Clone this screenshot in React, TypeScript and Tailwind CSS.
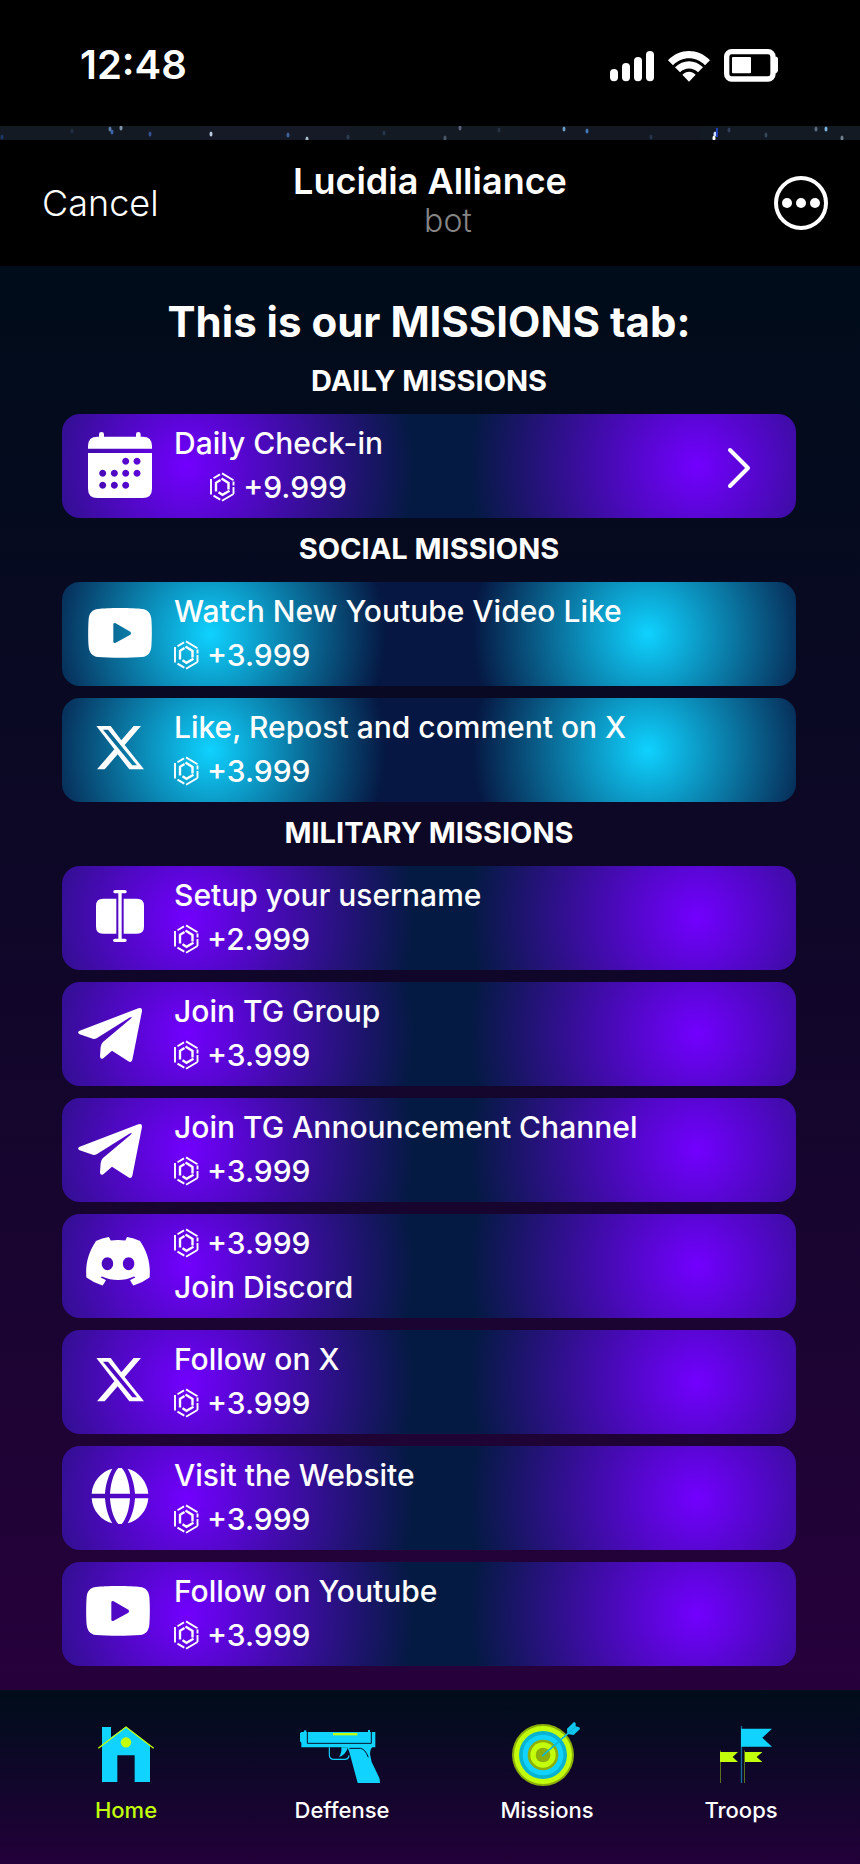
import type { ReactNode } from "react";
import { FaDiscord } from "react-icons/fa6";

type IconName = "calendar" | "youtube" | "x" | "rename" | "telegram" | "discord" | "globe" | "channel";

type Mission = {
  icon: IconName;
  title: string;
  points: string;
  centered?: boolean;
  pointsFirst?: boolean;
  arrow?: boolean;
};

const daily: Mission[] = [
  { icon: "calendar", title: "Daily Check-in", points: "+9.999", centered: true, arrow: true },
];

const social: Mission[] = [
  { icon: "youtube", title: "Watch New Youtube Video Like", points: "+3.999" },
  { icon: "x", title: "Like, Repost and comment on X", points: "+3.999" },
];

const military: Mission[] = [
  { icon: "rename", title: "Setup your username", points: "+2.999" },
  { icon: "telegram", title: "Join TG Group", points: "+3.999" },
  { icon: "telegram", title: "Join TG Announcement Channel", points: "+3.999" },
  { icon: "discord", title: "Join Discord", points: "+3.999", pointsFirst: true },
  { icon: "x", title: "Follow on X", points: "+3.999" },
  { icon: "globe", title: "Visit the Website", points: "+3.999" },
  { icon: "channel", title: "Follow on Youtube", points: "+3.999" },
];

const stars = [
  [110, 3, "#5d7da8"], [112, 6, "#3b62a8"], [121, 2, "#7f93a8"], [150, 8, "#33508f"],
  [211, 8, "#b9cbe0"], [288, 9, "#3f6296"], [307, 13, "#a9bccb"], [348, 11, "#2f3c50"],
  [384, 7, "#27364d"], [445, 12, "#4a5867"], [460, 2, "#596375"], [499, 4, "#263142"],
  [564, 3, "#6e9bc4"], [587, 5, "#4378b5"], [651, 11, "#26344a"], [714, 12, "#ffffff"],
  [715, 8, "#c9ddff"], [729, 4, "#30405a"], [766, 9, "#36475a"], [816, 3, "#5e6c7c"],
  [826, 3, "#79b4dd"], [842, 12, "#6e818c"], [2, 11, "#1d3768"], [72, 5, "#202d40"],
] as const;

function StarStrip() {
  return (
    <svg className="block h-[14px] w-full bg-[#10151f]" viewBox="0 0 860 14" preserveAspectRatio="xMidYMid slice" aria-hidden="true">
      <rect width="860" height="14" fill="#141a24" />
      <rect x="200" width="150" height="14" fill="#151a26" />
      <rect x="520" width="180" height="14" fill="#131823" />
      {stars.map(([x, y, c]) => (
        <ellipse key={`${x}-${y}`} cx={x} cy={y} rx="1.5" ry="2.6" fill={c} />
      ))}
      <path d="M717 2v9" stroke="#2140b8" strokeWidth="2" />
    </svg>
  );
}

function StatusBar() {
  return (
    <div className="flex h-[126px] items-center justify-between bg-black px-[80px] pt-1">
      <span className="text-[40px] leading-[48px] font-semibold">12:48</span>
      <svg className="h-[36px] w-[172px]" viewBox="54 48 516 108" fill="#fff" aria-label="Signal, Wi-Fi and battery">
        <rect x="60" y="114" width="24" height="37" rx="12" />
        <rect x="96" y="96" width="24" height="55" rx="12" />
        <rect x="132" y="78" width="24" height="73" rx="12" />
        <rect x="168" y="60" width="24" height="91" rx="12" />
        <path d="M234 88C270 51 324 51 360 88L345 103C318 75 276 75 249 103Z" />
        <path d="M255 109C279 85 315 85 339 109L324 124C308 109 286 109 270 124Z" />
        <path d="M277 131C289 119 305 119 317 131L297 152Z" />
        <rect x="410" y="62" width="139" height="82" rx="15" fill="none" stroke="#fff" strokeWidth="16" />
        <path d="M554 77H560Q564 80 564 84V118Q564 124 558 127H554Z" />
        <rect x="426" y="78" width="57" height="49" rx="3" />
      </svg>
    </div>
  );
}

function Header() {
  return (
    <header className="grid h-[126px] grid-cols-[1fr_auto_1fr] items-center bg-black px-8">
      <button type="button" className="justify-self-start pl-2.5 text-[36px] leading-[44px] font-light">
        Cancel
      </button>
      <div className="flex flex-col items-center pb-1">
        <p className="text-[36px] leading-[40px] font-semibold">Lucidia Alliance</p>
        <p className="pl-9 text-[32px] leading-[40px] font-light text-[#858585]">bot</p>
      </div>
      <button type="button" aria-label="More options" className="justify-self-end">
        <svg className="size-[54px]" viewBox="0 0 54 54" fill="#fff" aria-hidden="true">
          <circle cx="27" cy="27" r="25" fill="none" stroke="#fff" strokeWidth="4" />
          <circle cx="13" cy="27" r="5" />
          <circle cx="27" cy="27" r="5" />
          <circle cx="41" cy="27" r="5" />
        </svg>
      </button>
    </header>
  );
}

function Glyph({ viewBox, children }: { viewBox: string; children: ReactNode }) {
  return (
    <svg className="h-[76px] w-[84px] shrink-0" viewBox={viewBox} fill="#fff" aria-hidden="true">
      {children}
    </svg>
  );
}

function YoutubeShape() {
  return (
    <path
      fillRule="evenodd"
      d="M240 234C270 234 292 235 306 237C323 239 332 249 334 266C336 290 336 328 334 350C332 368 324 379 306 381C270 384 210 384 174 381C157 379 148 368 146 350C144 328 144 290 146 266C148 249 157 239 174 237C190 235 210 234 240 234ZM220 283V335Q221 341 227 338L271 314Q276 309 271 305L227 280Q221 277 220 283Z"
    />
  );
}

function MissionIcon({ name }: { name: IconName }) {
  switch (name) {
    case "calendar":
      return (
        <Glyph viewBox="114 474 252 228">
          <path d="M144 536V528Q144 500 172 500H177V493Q177 486 184.500 486Q192 486 192 493V500H288V493Q288 486 295 486Q302 486 302 493V500H308Q336 500 336 528V536Z" />
          <path
            fillRule="evenodd"
            d="M144 549H336V656Q336 684 308 684H172Q144 684 144 656ZM257 563a10.500 10.500 0 1 0 .1 0ZM291 563a10.500 10.500 0 1 0 .1 0ZM188 599a10.500 10.500 0 1 0 .1 0ZM223 599a10.500 10.500 0 1 0 .1 0ZM257 599a10.500 10.500 0 1 0 .1 0ZM291 599a10.500 10.500 0 1 0 .1 0ZM188 635a10.500 10.500 0 1 0 .1 0ZM223 635a10.500 10.500 0 1 0 .1 0ZM257 635a10.500 10.500 0 1 0 .1 0Z"
          />
        </Glyph>
      );
    case "youtube":
      return (
        <Glyph viewBox="114 198 252 228">
          <YoutubeShape />
        </Glyph>
      );
    case "channel":
      return (
        <Glyph viewBox="120 204 252 228">
          <YoutubeShape />
        </Glyph>
      );
    case "x":
      return (
        <Glyph viewBox="114 546 252 228">
          <path
            fillRule="evenodd"
            d="M169 588H212L244 631L281 588H303L254 645L312 718H268L233 673L194 718H171L223 658ZM189 599L277 706H291L204 599Z"
          />
        </Glyph>
      );
    case "rename":
      return (
        <Glyph viewBox="114 174 252 228">
          <path d="M189 230H229V335H189Q168 335 168 314V251Q168 230 189 230Z" />
          <path d="M251 230H291Q312 230 312 251V314Q312 335 291 335H251Z" />
          <path d="M225 204H255Q260 204 260 209Q260 214 255 214H245V350H255Q260 350 260 355Q260 360 255 360H225Q219 360 219 355Q219 350 225 350H235V214H225Q220 214 220 209Q220 204 225 204Z" />
        </Glyph>
      );
    case "telegram":
      return (
        <Glyph viewBox="114 528 252 228">
          <path d="M119 632L295 565Q307 561 306 573L277 719Q274 729 265 724L216 692L190 715Q181 720 180 709L182 681Q182 673 189 666L272 596Q280 588 268 593L170 655Q162 659 154 655L119 643Q110 637 119 632Z" />
        </Glyph>
      );
    case "discord":
      return (
        <Glyph viewBox="114 414 252 228">
          <FaDiscord x={130} y={410} size={208} />
        </Glyph>
      );
    case "globe":
      return (
        <Glyph viewBox="114 90 252 228">
          <path d="M217 116C206 136 197 162 195 191H155C157 155 184 124 217 116Z" />
          <path d="M263 116C296 124 322 155 325 191H285C283 162 275 136 263 116Z" />
          <path d="M210 191C212 156 223 126 235 114H245C257 126 268 156 270 191Z" />
          <path d="M155 205H195C197 234 205 260 217 280C184 272 157 242 155 205Z" />
          <path d="M285 205H325C322 242 296 272 263 280C275 260 283 234 285 205Z" />
          <path d="M210 205H270C268 240 257 270 245 282H235C223 270 212 240 210 205Z" />
        </Glyph>
      );
  }
}

function Coin() {
  return (
    <svg className="h-[30px] w-[25px] shrink-0" viewBox="0 0 25 30" fill="none" stroke="#fff" strokeWidth="1.900" aria-hidden="true">
      <path d="M1 7V22.500M3.500 6.200L10 2.400M12 1.400L23.500 8.200M23.500 9.500V13.500M23.500 15V22M3.500 23.600L10.300 27.600M12 28.700L23.500 22" />
      <path d="M6 19.500V10.800L10.500 8M11.500 6.600L18.500 11V17.500M8.500 20.300L12.500 22.800L19.500 18.800" strokeWidth="2.400" />
    </svg>
  );
}

function MissionCard({ mission, tone }: { mission: Mission; tone: "purple" | "cyan" }) {
  const surface =
    tone === "purple"
      ? "bg-[radial-gradient(circle_228px_at_17%_50%,#7200ff,#7200ff00),radial-gradient(circle_228px_at_86.5%_50%,#7200ff,#7200ff00)] bg-[#041a42]"
      : "bg-[radial-gradient(circle_176px_at_20.2%_50%,#0fd2ff,#0fd2ff00),radial-gradient(circle_176px_at_79.8%_50%,#0fd2ff,#0fd2ff00)] bg-[#051742]";

  return (
    <button type="button" className={`flex h-[104px] w-full items-center gap-3 rounded-[18px] pr-11 pl-4 text-left text-[30px] leading-[44px] font-medium ${surface}`}>
      <MissionIcon name={mission.icon} />
      <span className={`flex pb-[2px] ${mission.pointsFirst ? "flex-col-reverse" : "flex-col"} ${mission.centered ? "items-center" : "items-start"}`}>
        <span>{mission.title}</span>
        <span className="flex items-center gap-2">
          <Coin />
          {mission.points}
        </span>
      </span>
      {mission.arrow && (
        <svg className="mt-1 ml-auto h-[44px] w-[26px]" viewBox="0 0 26 44" fill="none" stroke="#fff" strokeWidth="4" strokeLinecap="round" strokeLinejoin="round" aria-hidden="true">
          <path d="M4 4L22 22L4 40" />
        </svg>
      )}
    </button>
  );
}

function Section({ title, missions, tone }: { title: string; missions: Mission[]; tone: "purple" | "cyan" }) {
  return (
    <section>
      <h2 className="h-[64px] text-center text-[29px] leading-[62px] font-bold">{title}</h2>
      <ul className="flex flex-col gap-3">
        {missions.map((m) => (
          <li key={m.title}>
            <MissionCard mission={m} tone={tone} />
          </li>
        ))}
      </ul>
    </section>
  );
}

function NavItem({ label, viewBox, active, children }: { label: string; viewBox: string; active?: boolean; children: ReactNode }) {
  return (
    <a href={`#${label.toLowerCase()}`} className={`flex flex-col items-center gap-2 text-[22px] leading-[32px] font-medium ${active ? "text-[#c3ff0a]" : "text-white"}`}>
      <svg className="h-[64px] w-[88px]" viewBox={viewBox} aria-hidden="true">
        {children}
      </svg>
      {label}
    </a>
  );
}

function BottomNav() {
  return (
    <nav className="grid min-h-[174px] grid-cols-[216fr_216fr_194fr_194fr] items-start bg-linear-to-b from-[#000d1a] via-[#10062a] to-[#220039] pt-8 pr-[22px] pl-[18px]">
      <NavItem label="Home" viewBox="246 126 264 192" active>
        <path d="M306 141H333V172L378 140L450 196V306H404V226H352V306H306Z" fill="#10d3ff" />
        <path d="M295 205L378 141L461 205" fill="none" stroke="#c3ff0a" strokeWidth="4" />
        <circle cx="378" cy="187" r="15.500" fill="#c3ff0a" />
      </NavItem>
      <NavItem label="Deffense" viewBox="894 126 264 192">
        <path d="M904 156H911L914 150L919 152V156H1104V150H1110V156H1126V202H1117Q1111 206 1110 222L1115 246L1137 292Q1140 298 1140 309H1073L1048 216L1042 202H904V188L900 184V160Z" fill="#10d3ff" />
        <path d="M922 156V190H1114V156" fill="none" stroke="#071028" strokeWidth="3" />
        <path d="M1048 205H1082Q1096 208 1105 232" fill="none" stroke="#0b0825" strokeWidth="3" />
        <path d="M988 202V224Q988 238 1002 238H1034Q1046 238 1047 226" fill="none" stroke="#10d3ff" strokeWidth="3.500" />
        <path d="M1024 202H1044Q1037 225 1017 231Q1026 218 1024 202Z" fill="#10d3ff" />
        <rect x="999" y="159" width="73" height="7" fill="#c3ff0a" />
      </NavItem>
      <NavItem label="Missions" viewBox="219 126 264 192">
        <circle cx="339" cy="225" r="93" fill="#8cae0a" />
        <circle cx="339" cy="225" r="87" fill="#c3ff0a" />
        <circle cx="339" cy="225" r="72" fill="#08b3d0" />
        <circle cx="339" cy="225" r="61" fill="#10d3ff" />
        <circle cx="339" cy="225" r="46" fill="#8cae0a" />
        <circle cx="339" cy="225" r="38" fill="#c3ff0a" />
        <circle cx="339" cy="225" r="22" fill="#8cae0a" />
        <path d="M338 227L414 160" stroke="#08b9d9" strokeWidth="5" strokeLinecap="round" />
        <path d="M411 146L432 126L437 129V139L448 142L450 147L431 165L412 162Z" fill="#10c6ed" />
        <path d="M413 161L437 140" stroke="#08a8c8" strokeWidth="2" />
      </NavItem>
      <NavItem label="Troops" viewBox="801 126 264 192">
        <path d="M934.500 138V309" stroke="#126f99" strokeWidth="4" />
        <path d="M871.500 211V309M943.500 211V309" stroke="#5a7219" strokeWidth="3" />
        <path d="M933 146H1026L997 173L1026 200H933Z" fill="#10d3ff" />
        <path d="M870 216H924L908 231L924 246H870ZM945 216H997L980 231L997 246H945Z" fill="#c3ff0a" />
      </NavItem>
    </nav>
  );
}

export default function App() {
  return (
    <div className="flex min-h-screen flex-col bg-black font-['Inter',sans-serif] text-white">
      <StatusBar />
      <StarStrip />
      <Header />
      <main className="grow bg-linear-to-b from-[#000c19] via-[#100629] to-[#26003b] pt-7 pr-[64px] pb-6 pl-[62px]">
        <h1 className="text-center text-[42px] leading-[56px] font-bold">This is our MISSIONS tab:</h1>
        <Section title="DAILY MISSIONS" missions={daily} tone="purple" />
        <Section title="SOCIAL MISSIONS" missions={social} tone="cyan" />
        <Section title="MILITARY MISSIONS" missions={military} tone="purple" />
      </main>
      <BottomNav />
    </div>
  );
}
